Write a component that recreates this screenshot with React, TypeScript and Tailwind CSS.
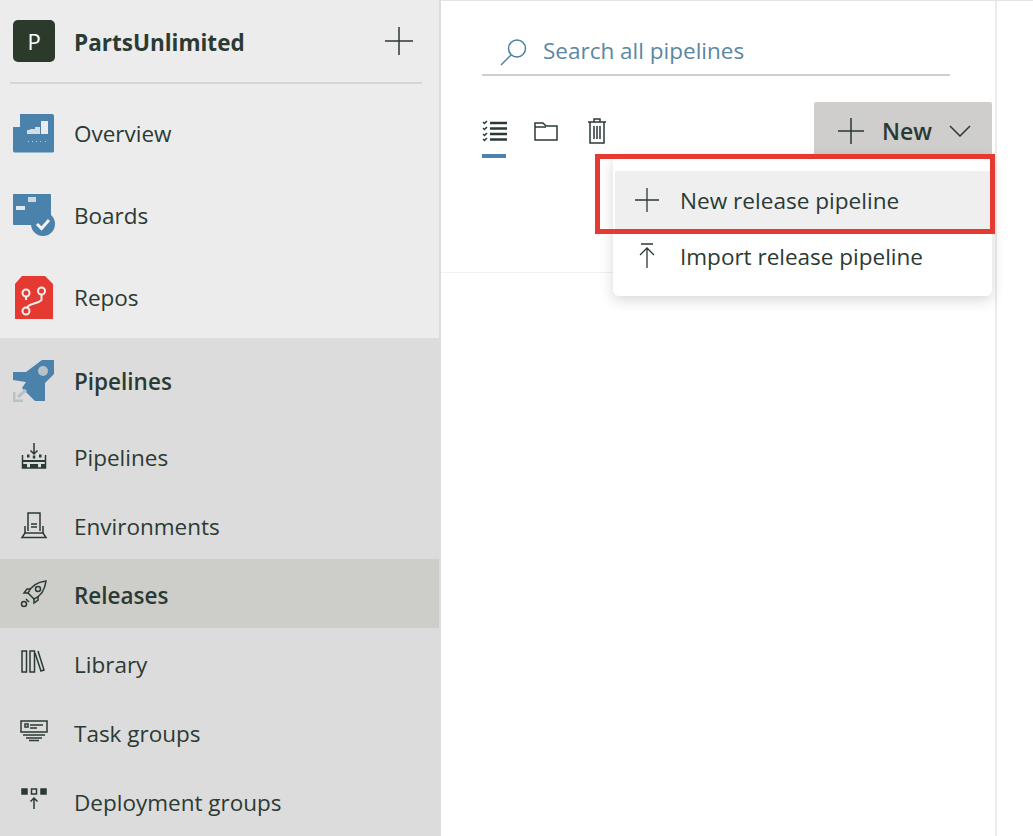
import type { ReactNode } from "react";

const ink = "#2b3a33";

function OverviewIcon() {
  return (
    <svg width="42" height="39" viewBox="0 0 42 39">
      <path d="M7 0H39a2 2 0 0 1 2 2V37a1.500 1.500 0 0 1-2 1.500H2A2 2 0 0 1 0 37V13H7Z" fill="#4a82ab" />
      <path d="M14 20v-4h3v-1h5v-2h5v7Z" fill="#d5dde0" />
      <rect x="28" y="7" width="7" height="13" fill="#e8ecee" />
      <path d="M15 27.500h14M32 27.500h1" stroke="#b9cedc" strokeWidth="1" strokeDasharray="1 3" />
    </svg>
  );
}

function BoardsIcon() {
  return (
    <svg width="42" height="42" viewBox="0 0 42 42">
      <path d="M1 0H37a1 1 0 0 1 1 1V31H1a1 1 0 0 1-1-1V1a1 1 0 0 1 1-1Z" fill="#4a82ab" />
      <rect x="15" y="3" width="8" height="5" fill="#cdd9e0" />
      <rect x="3" y="12" width="9" height="4" fill="#e3e8ea" />
      <circle cx="30" cy="30" r="12" fill="#4a82ab" />
      <path d="M24 30l4.500 4.500L36 26" fill="none" stroke="#f3f3f3" strokeWidth="3" />
    </svg>
  );
}

function ReposIcon() {
  return (
    <svg width="42" height="43" viewBox="0 0 42 43">
      <path d="M9 0H32L40 8V43H2V8Z" fill="#e53a31" />
      <g fill="none" stroke="#f4f0ee" strokeWidth="2">
        <circle cx="13" cy="17" r="3.500" />
        <circle cx="28.500" cy="15" r="3.500" />
        <circle cx="13" cy="35" r="3.500" />
        <path d="M13 21v3M28.500 19v5l-3 2-9 3-3 3" />
      </g>
    </svg>
  );
}

function PipelinesBrandIcon() {
  return (
    <svg width="42" height="42" viewBox="0 0 42 42">
      <path d="M0 12H13L29 0H41V14L32 23V41H22L9 28 13 22 0 20Z" fill="#4a82ab" />
      <circle cx="30" cy="11" r="5" fill="#b7c3ca" />
      <path d="M1 32V41H10" fill="none" stroke="#b6c2ca" strokeWidth="3" />
      <path d="M5 37L13 30" stroke="#b6c2ca" strokeWidth="3" />
    </svg>
  );
}

function LineIcon({ children }: { children: ReactNode }) {
  return (
    <svg width="28" height="28" viewBox="0 0 28 28" fill="none" stroke={ink} strokeWidth="1.500">
      {children}
    </svg>
  );
}

const subIcons: Record<string, ReactNode> = {
  Pipelines: (
    <LineIcon>
      <path d="M14 1v11M10.500 8.500l3.500 3.500 3.500-3.500" />
      <path d="M2.500 13v13h23V13" />
      <path d="M7 14h2.500M12.800 15h2.500M19 14h2.500" strokeWidth="3" />
      <path d="M2 19h24" strokeWidth="2" />
      <path d="M2 24h5M10 24h8M21 24h5" strokeWidth="4" />
    </LineIcon>
  ),
  Environments: (
    <LineIcon>
      <path d="M8 20V2h12v18" />
      <path d="M11 13h6M11 16h6" />
      <path d="M5 15v7L2 26.500h24L23 22v-7M4 22h20" />
    </LineIcon>
  ),
  Releases: (
    <LineIcon>
      <path d="M12 17L8 13C11 6 18 2 26 1c-1 8-5 15-12 18Z" />
      <circle cx="18" cy="9" r="2.500" />
      <path d="M8 13H4l3-4h4M14 19v4l4-3v-4" />
      <circle cx="4" cy="24" r="2.500" />
      <path d="M6 19l3 3" />
    </LineIcon>
  ),
  Library: (
    <LineIcon>
      <rect x="2" y="2" width="4.500" height="21" />
      <rect x="10" y="2" width="4.500" height="21" />
      <path d="M18 2l6 19-3 1-6-18" />
    </LineIcon>
  ),
  "Task groups": (
    <LineIcon>
      <rect x="1" y="3" width="26" height="11" />
      <rect x="5" y="6" width="3" height="3" />
      <path d="M10 7h13M10 10h7M3 17h22M6 20h16M9 22.500h10" />
    </LineIcon>
  ),
  "Deployment groups": (
    <LineIcon>
      <rect x="2" y="2" width="5" height="5" fill={ink} />
      <rect x="11.500" y="2" width="5" height="5" />
      <rect x="21" y="2" width="5" height="5" fill={ink} />
      <path d="M14 22V11M10.500 14.500L14 11l3.500 3.500" />
    </LineIcon>
  ),
};

function MainRow({ icon, label, bold }: { icon: ReactNode; label: string; bold?: boolean }) {
  return (
    <div className="flex h-[82px] shrink-0 items-center pl-[13px]">
      <div className="flex w-[61px] shrink-0 items-center">{icon}</div>
      <span className={`mt-[2px] text-[22.5px] text-[#2b3a33] ${bold ? "font-semibold" : ""}`}>{label}</span>
    </div>
  );
}

function SubRow({ label, active }: { label: string; active?: boolean }) {
  return (
    <div className={`flex h-[69px] shrink-0 items-center pl-[20px] ${active ? "bg-[#cdcdca]" : ""}`}>
      <div className="flex w-[54px] shrink-0 items-center">{subIcons[label]}</div>
      <span className={`mt-[4px] text-[22.5px] text-[#2b3a33] ${active ? "font-semibold" : ""}`}>{label}</span>
    </div>
  );
}

export default function App() {
  return (
    <div className="flex h-[836px] w-[1033px] overflow-hidden bg-white font-['Open_Sans',sans-serif]">
      <aside className="flex h-full w-[441px] shrink-0 flex-col border-r-2 border-[#dcdcdc] bg-[#ececec]">
        <div className="ml-[10px] flex h-[84px] w-[412px] shrink-0 items-center justify-between border-b-2 border-[#d6d6d6] pl-[3px] pr-[8px]">
          <div className="flex items-center">
            <div className="flex h-[42px] w-[42px] items-center justify-center rounded-[5px] bg-[#2c3a2c] text-[22px] text-white">
              P
            </div>
            <span className="ml-[19px] mt-[4px] text-[22.5px] font-bold text-[#2b3a33]">PartsUnlimited</span>
          </div>
          <svg width="30" height="30" viewBox="0 0 30 30" stroke={ink} strokeWidth="1.500">
            <path d="M15 1v28M1 15h28" />
          </svg>
        </div>
        <div className="flex h-[254px] shrink-0 flex-col pt-[8px]">
          <MainRow icon={<OverviewIcon />} label="Overview" />
          <MainRow icon={<BoardsIcon />} label="Boards" />
          <MainRow icon={<ReposIcon />} label="Repos" />
        </div>
        <div className="flex flex-1 flex-col bg-[#dcdcdc] pt-[2px]">
          <MainRow icon={<PipelinesBrandIcon />} label="Pipelines" bold />
          <div className="-mt-[1px] flex flex-col">
            <SubRow label="Pipelines" />
            <SubRow label="Environments" />
            <SubRow label="Releases" active />
            <SubRow label="Library" />
            <SubRow label="Task groups" />
            <SubRow label="Deployment groups" />
          </div>
        </div>
      </aside>

      <main className="relative flex h-full flex-1 flex-col border-t border-[#e4e4e4]">
        <div className="flex w-[556px] flex-1 flex-col border-r-2 border-[#ececec] px-[41px]">
          <div className="mt-[28px] flex h-[47px] w-[468px] items-center border-b-2 border-[#cfcfcf] pl-[18px]">
            <svg width="28" height="28" viewBox="0 0 28 28" fill="none" stroke="#4a7f9e" strokeWidth="1.500">
              <circle cx="17" cy="10.500" r="8.500" />
              <path d="M11 17L1 27" />
            </svg>
            <span className="-mt-[2px] ml-[15px] text-[22.500px] text-[#5b87a3]">Search all pipelines</span>
          </div>
          <div className="mt-[26px] flex items-start justify-between">
            <div className="flex items-center gap-[27px] pt-[16px]">
              <div className="relative">
                <svg width="25" height="22" viewBox="0 0 25 22" fill="none" stroke={ink} strokeWidth="2.500" className="block">
                  <path d="M8 3h17M8 8.500h17M8 14h17M8 19.500h17" />
                  <path d="M1 2l1.500 1.500L5 1M1 8l1.500 1.500L5 7M1 14l1.500 1.500L5 13M1 19l1.500 1.500L5 18" strokeWidth="1.500" />
                </svg>
                <div className="absolute left-0 top-[34px] h-[4px] w-[24px] bg-[#4a82ab]" />
              </div>
              <svg width="24" height="22" viewBox="0 0 24 22" fill="none" stroke={ink} strokeWidth="1.500">
                <path d="M1 20V3h8l3 3h11v14Z" />
                <path d="M1 7h11" />
              </svg>
              <svg width="20" height="26" viewBox="0 0 20 26" fill="none" stroke={ink} strokeWidth="1.500" className="ml-[2px]">
                <path d="M1 4h18M7 4V1h6v3M3 4v21h14V4" />
                <path d="M7 8v13M10 8v13M13 8v13" />
              </svg>
            </div>
            <div className="mr-[-38px] flex h-[53px] w-[178px] items-center rounded-t-[2px] bg-[#cfcecc] pl-[22px] pt-[5px]">
              <svg width="30" height="30" viewBox="0 0 30 30" stroke={ink} strokeWidth="1.500">
                <path d="M15 2v26M2 15h26" />
              </svg>
              <span className="ml-[16px] text-[23px] font-semibold text-[#2b3a33]">New</span>
              <svg width="22" height="12" viewBox="0 0 22 12" fill="none" stroke={ink} strokeWidth="1.500" className="ml-[17px]">
                <path d="M1 1l10 10 10-10" />
              </svg>
            </div>
          </div>
          <div className="-ml-[41px] mt-[117px] h-px bg-[#f0f0f0]" />
        </div>

        {/* dropdown over the page */}
        <div className="absolute left-[172px] top-[154px] h-[141px] w-[379px] rounded-[6px] bg-white pt-[16px] shadow-[0_4px_14px_rgba(0,0,0,0.16)]">
          <div className="ml-[2px] mr-[2px] flex h-[58px] items-center bg-[#efefef] pl-[19px]">
            <svg width="26" height="26" viewBox="0 0 26 26" stroke={ink} strokeWidth="1.300">
              <path d="M13 1v24M1 13h24" />
            </svg>
            <span className="ml-[20px] mt-[2px] text-[22.6px] text-[#2b3a33]">New release pipeline</span>
          </div>
          <div className="flex h-[54px] items-center pl-[21px]">
            <svg width="26" height="26" viewBox="0 0 26 26" fill="none" stroke={ink} strokeWidth="1.300">
              <path d="M7 1h12M13 25V5M6 12l7-7 7 7" />
            </svg>
            <span className="ml-[20px] mt-[2px] text-[22.5px] text-[#2b3a33]">Import release pipeline</span>
          </div>
        </div>
        <div className="absolute left-[154px] top-[153px] h-[80px] w-[400px] border-[5px] border-[#e53a31]" />
      </main>
    </div>
  );
}
